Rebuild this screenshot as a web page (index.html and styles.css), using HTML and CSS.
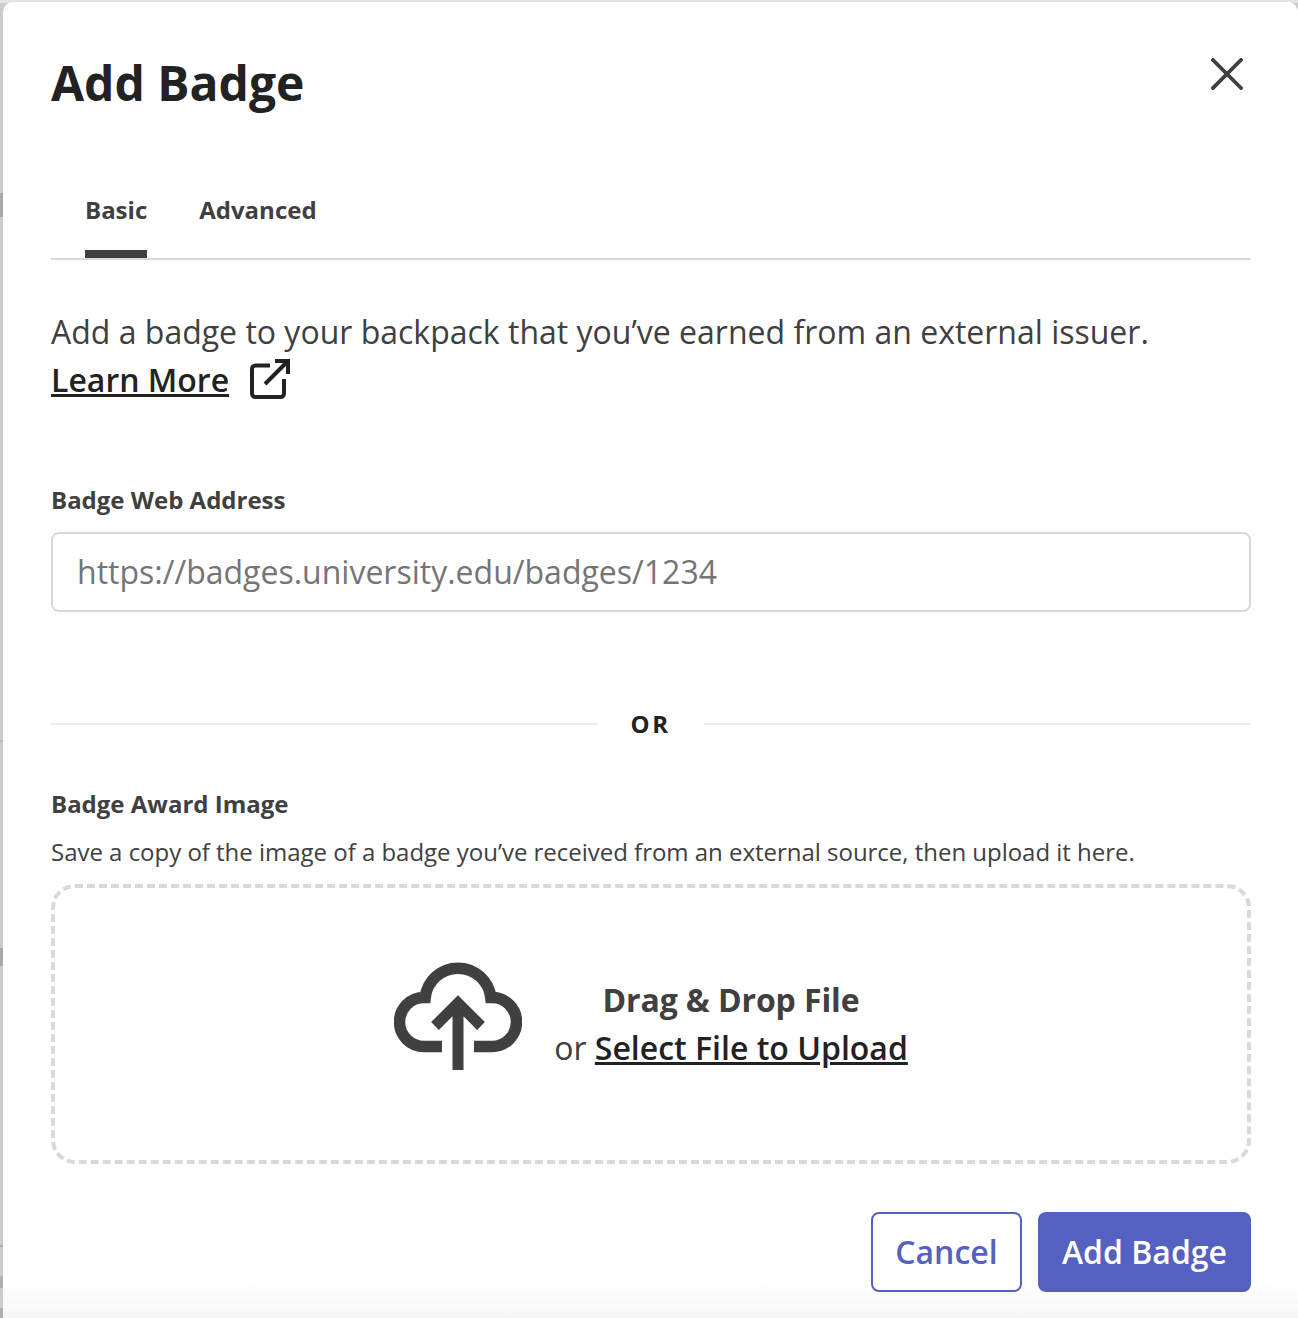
FILE: index.html
```html
<!DOCTYPE html>
<html lang="en">
<head>
<meta charset="utf-8">
<title>Add Badge</title>
<link rel="stylesheet" href="styles.css">
</head>
<body>
<div class="modal">
  <header class="head">
    <h1 class="title">Add Badge</h1>
    <button class="close" aria-label="Close">
      <svg width="32" height="32" viewBox="0 0 32 32"><path d="M2 2 30 30M30 2 2 30" fill="none" stroke="#404040" stroke-width="3.800" stroke-linecap="square"/></svg>
    </button>
  </header>
  <nav class="tabs">
    <a class="tab active">Basic</a>
    <a class="tab">Advanced</a>
  </nav>
  <p class="intro">Add a badge to your backpack that you’ve earned from an external issuer.<br>
    <a class="link">Learn More</a>
    <svg class="ext" width="40" height="40" viewBox="0 0 40 40"><path d="M20 6.500H5.500a3.500 3.500 0 0 0-3.500 3.500v24.500a3.500 3.500 0 0 0 3.500 3.500h25a3.500 3.500 0 0 0 3.500-3.500V20M15 25 38 2M25 2H38V15" fill="none" stroke="#222" stroke-width="4"/></svg>
  </p>
  <label class="label web-label">Badge Web Address</label>
  <div class="input">https://badges.university.edu/badges/1234</div>
  <div class="divider"><span class="rule"></span><span class="or">OR</span><span class="rule"></span></div>
  <label class="label">Badge Award Image</label>
  <p class="hint">Save a copy of the image of a badge you’ve received from an external source, then upload it here.</p>
  <div class="drop">
    <svg class="cloud" width="128" height="108" viewBox="0 0 128 108"><path d="M48 84.500H30A24.500 24.500 0 0 1 30 35.500H31.200A33 33 0 0 1 96.800 35.500H98A24.500 24.500 0 0 1 98 84.500H80" fill="none" stroke="#404040" stroke-width="11.500"/><path d="M64 108V42M41 64 64 41 87 64" fill="none" stroke="#404040" stroke-width="11"/></svg>
    <div class="drop-text">
      <div class="drag">Drag &amp; Drop File</div>
      <div class="select">or <a class="link">Select File to Upload</a></div>
    </div>
  </div>
  <footer class="actions">
    <button class="btn cancel">Cancel</button>
    <button class="btn primary">Add Badge</button>
  </footer>
</div>
</body>
</html>
```
FILE: styles.css
```css
* { box-sizing: border-box; }
html, body { height: 100%; }
body {
  margin: 0;
  padding: 2px 0 0 3px;
  background: linear-gradient(
    #e4e4e4 0 3px,
    #cccccc 3px 193px,
    #a8a8a8 193px 217px,
    #cccccc 217px 740px,
    #bdbdbd 740px 742px,
    #cccccc 742px 948px,
    #a8a8a8 948px 966px,
    #cccccc 966px 1245px,
    #aaaaaa 1245px 1247px,
    #cccccc 1247px 1276px,
    #b0b0b0 1276px 1288px,
    #cccccc 1288px 1308px,
    #b0b0b0 1308px
  );
  font-family: "Open Sans", sans-serif;
  overflow: hidden;
}
.modal {
  height: 1316px;
  padding: 0 47px 0 48px;
  background: linear-gradient(#fff 0, #fff 1280px, #f6f6f6 1316px);
  border-radius: 10px 10px 0 0;
  color: #404040;
}
.head { display: flex; justify-content: space-between; align-items: flex-start; height: 158px; }
.title { margin: 49px 0 0; font-size: 48px; line-height: 64px; font-weight: 700; color: #222; }
.close { margin: 56px 8px 0 0; padding: 0; border: 0; background: none; width: 32px; height: 32px; }
.close svg { display: block; }
.tabs {
  display: flex;
  gap: 52px;
  height: 100px;
  padding-left: 34px;
  border-bottom: 2px solid #d9d9d9;
}
.tab { height: 98px; font-size: 24px; line-height: 100px; font-weight: 700; color: #404040; }
.tab.active { border-bottom: 8px solid #404040; }
.intro { margin: 48px 0 0; font-size: 32px; line-height: 48px; color: #404040; }
.link { color: #222; text-decoration: underline; font-weight: 600; }
.ext { margin-left: 13px; vertical-align: -7px; }
.label { display: block; font-size: 24px; line-height: 32px; font-weight: 700; color: #404040; }
.web-label { margin-top: 80px; }
.input {
  height: 80px;
  margin-top: 16px;
  padding: 0 24px;
  border: 2px solid #d9d9d9;
  border-radius: 8px;
  font-size: 32px;
  line-height: 76px;
  color: #757575;
}
.divider { display: flex; align-items: center; gap: 33px; height: 32px; margin-top: 96px; }
.rule { flex: 1; height: 2px; background: #eeeeee; }
.or { font-size: 24px; font-weight: 700; letter-spacing: 2.5px; line-height: 32px; color: #222; margin-right: 1px; }
.divider + .label { margin-top: 48px; }
.hint { margin: 16px 0 0; font-size: 24px; line-height: 32px; letter-spacing: -0.02px; color: #404040; }
.drop {
  display: flex;
  justify-content: center;
  align-items: center;
  gap: 32px;
  height: 280px;
  margin-top: 16px;
  border: 4px dashed #d9d9d9;
  border-radius: 24px;
}
.cloud { display: block; flex: none; margin-bottom: 16px; }
.drop-text { text-align: center; font-size: 32px; line-height: 48px; }
.drag { font-weight: 700; letter-spacing: -0.12px; }
.actions { display: flex; justify-content: flex-end; gap: 16px; margin-top: 48px; }
.btn {
  height: 80px;
  padding: 0 24px;
  border-radius: 8px;
  font-family: inherit;
  font-size: 32px;
  font-weight: 600;
  line-height: 44px;
}
.cancel { width: 151px; padding: 0; border: 2px solid #5561c0; background: #fff; color: #5561c0; }
.primary { border: 0; background: #5561c0; color: #fff; }
```
